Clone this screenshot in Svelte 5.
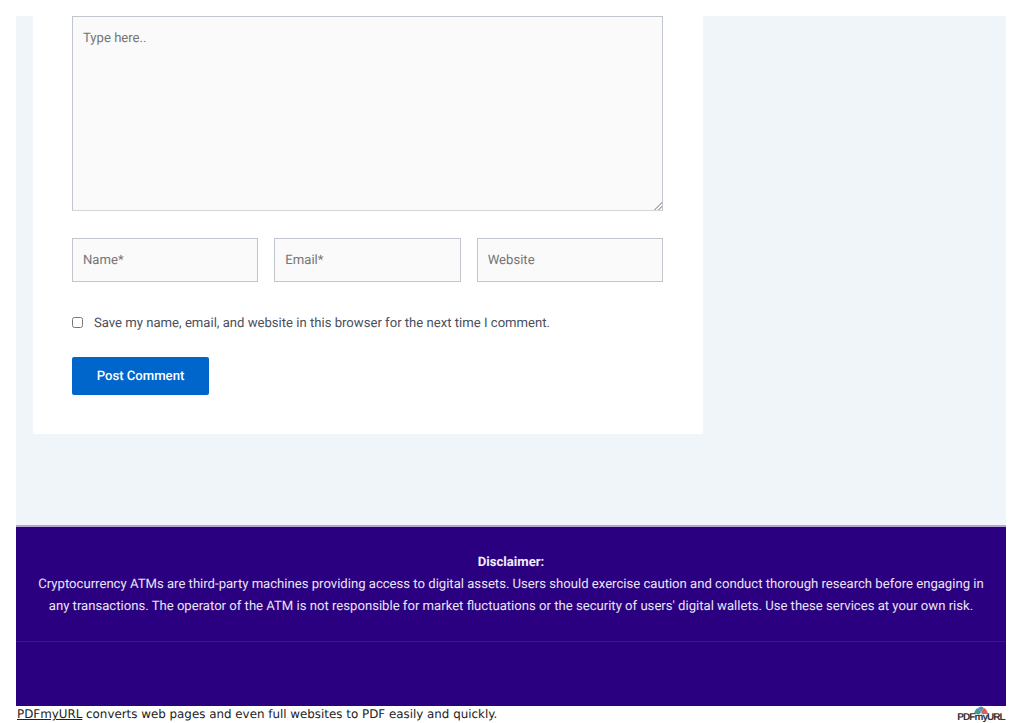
<script>
  const fields = [
    { placeholder: "Name*", type: "text" },
    { placeholder: "Email*", type: "email" },
    { placeholder: "Website", type: "url" },
  ];
</script>

<div class="page">
  <main class="content">
    <section class="card">
      <textarea placeholder="Type here.."></textarea>
      <div class="fields">
        {#each fields as field}
          <input type={field.type} placeholder={field.placeholder} />
        {/each}
      </div>
      <label class="save">
        <input type="checkbox" />
        <span>Save my name, email, and website in this browser for the next time I comment.</span>
      </label>
      <button>Post Comment</button>
    </section>
  </main>

  <footer>
    <div class="disclaimer">
      <strong>Disclaimer:</strong>
      <p>
        Cryptocurrency ATMs are third-party machines providing access to digital assets. Users should exercise caution and conduct thorough research before engaging in any transactions. The operator of the ATM is not responsible for market fluctuations or the security of users' digital wallets. Use these services at your own risk.
      </p>
    </div>
    <div class="footer-bottom"></div>
  </footer>

  <div class="pdf-bar">
    <span><a href="#top">PDFmyURL</a> converts web pages and even full websites to PDF easily and quickly.</span>
    <div class="logo">
      <svg width="14" height="8" viewBox="0 0 14 8">
        <path d="M0 8 Q1 3 4 2 L7 6 L6 8Z" fill="#3f9c8f" />
        <path d="M4 2 Q7 -1 10 2 L7 6Z" fill="#5a8fc0" />
        <path d="M10 2 Q13 3 14 8 L8 8 L7 6Z" fill="#d9635c" />
      </svg>
      <span class="logo-text">PDFmyURL</span>
    </div>
  </div>
</div>

<style>
  :global(body) {
    background: #fff;
    font-family: Roboto, sans-serif;
    text-rendering: geometricPrecision;
  }

  .page {
    padding: 16px 17px 0 16px;
  }

  .content {
    height: 509px;
    background: #f0f5fa;
    padding-left: 17px;
    box-sizing: border-box;
  }

  .card {
    width: 670px;
    height: 418px;
    box-sizing: border-box;
    background: #fff;
    padding: 0 39px;
  }

  textarea,
  .fields input {
    display: block;
    box-sizing: border-box;
    background: #fafafa;
    border: 1px solid #c2c6ce;
    border-radius: 0;
    font-family: Roboto, sans-serif;
    font-size: 13.125px;
    text-rendering: geometricPrecision;
    color: #333;
    outline: none;
  }

  textarea {
    width: 591px;
    height: 194.5px;
    padding: 13px 10px;
    line-height: 18px;
    margin: 0;
    border-bottom-color: #d2d5da;
  }

  textarea::-webkit-resizer {
    background: linear-gradient(135deg, transparent 50%, #b5b5b5 50%, #b5b5b5 60%, transparent 60%, transparent 74%, #b5b5b5 74%, #b5b5b5 84%, transparent 84%) bottom right / 8px 8px no-repeat;
  }

  textarea::placeholder,
  input::placeholder {
    color: #757575;
    opacity: 1;
  }

  .fields {
    display: grid;
    grid-template-columns: repeat(3, 1fr);
    gap: 16px;
    width: 591px;
    margin-top: 27.5px;
  }

  .fields input {
    width: 100%;
    height: 43.5px;
    padding: 2px 10px 0;
  }

  .save {
    display: flex;
    align-items: center;
    margin-top: 32px;
    height: 19px;
    font-size: 13.125px;
    color: #4a4f5c;
  }

  .save input {
    width: 11px;
    height: 11px;
    margin: 0 11px 0 0;
    position: relative;
    top: -1px;
  }

  .save span {
    padding-top: 1px;
  }

  button {
    display: block;
    width: 137px;
    height: 38px;
    margin-top: 24px;
    padding: 2px 0 0;
    background: #0066cc;
    color: #fff;
    border: none;
    border-radius: 2px;
    font-family: Roboto, sans-serif;
    font-size: 13.125px;
    font-weight: 500;
    text-rendering: geometricPrecision;
  }

  footer {
    height: 181px;
    box-sizing: border-box;
    background: #2b0080;
    border-top: 2px solid #b3a5d6;
    color: #e8e4f4;
    font-size: 13.125px;
    line-height: 22px;
    text-align: center;
  }

  .disclaimer {
    height: 115px;
    box-sizing: border-box;
    padding: 25px 16px 0;
    border-bottom: 1px solid #3c1590;
  }

  strong {
    display: block;
    font-weight: 700;
    color: #f0ecfa;
  }

  p {
    margin: 0;
  }

  .pdf-bar {
    display: flex;
    justify-content: space-between;
    align-items: flex-start;
    padding-left: 1px;
    font-family: "DejaVu Sans", sans-serif;
    font-size: 11.88px;
    color: #222;
    height: 17px;
    line-height: 16px;
  }

  .pdf-bar a {
    color: #222;
  }

  .logo {
    display: flex;
    flex-direction: column;
    align-items: center;
    width: 48px;
    margin-right: 1px;
  }

  .logo svg {
    display: block;
  }

  .logo-text {
    font-family: "Liberation Sans", sans-serif;
    font-size: 10px;
    font-weight: 700;
    letter-spacing: -0.95px;
    line-height: 8px;
    white-space: nowrap;
    color: #333;
  }
</style>
